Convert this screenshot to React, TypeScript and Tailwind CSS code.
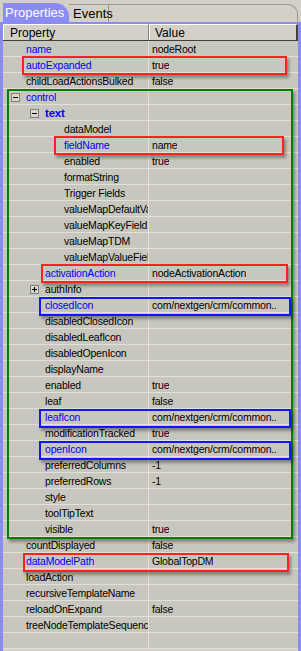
type Row = {
  label: string;
  value?: string;
  level: number;
  blue?: boolean;
  bold?: boolean;
  toggle?: "-" | "+";
};

const ROWS: Row[] = [
  { label: "name", value: "nodeRoot", level: 0, blue: true },
  { label: "autoExpanded", value: "true", level: 0, blue: true },
  { label: "childLoadActionsBulked", value: "false", level: 0 },
  { label: "control", level: 0, blue: true, toggle: "-" },
  { label: "text", level: 1, blue: true, bold: true, toggle: "-" },
  { label: "dataModel", level: 2 },
  { label: "fieldName", value: "name", level: 2, blue: true },
  { label: "enabled", value: "true", level: 2 },
  { label: "formatString", level: 2 },
  { label: "Trigger Fields", level: 2 },
  { label: "valueMapDefaultValue", level: 2 },
  { label: "valueMapKeyField", level: 2 },
  { label: "valueMapTDM", level: 2 },
  { label: "valueMapValueField", level: 2 },
  { label: "activationAction", value: "nodeActivationAction", level: 1, blue: true },
  { label: "authInfo", level: 1, toggle: "+" },
  { label: "closedIcon", value: "com/nextgen/crm/common..", level: 1, blue: true },
  { label: "disabledClosedIcon", level: 1 },
  { label: "disabledLeafIcon", level: 1 },
  { label: "disabledOpenIcon", level: 1 },
  { label: "displayName", level: 1 },
  { label: "enabled", value: "true", level: 1 },
  { label: "leaf", value: "false", level: 1 },
  { label: "leafIcon", value: "com/nextgen/crm/common..", level: 1, blue: true },
  { label: "modificationTracked", value: "true", level: 1 },
  { label: "openIcon", value: "com/nextgen/crm/common..", level: 1, blue: true },
  { label: "preferredColumns", value: "-1", level: 1 },
  { label: "preferredRows", value: "-1", level: 1 },
  { label: "style", level: 1 },
  { label: "toolTipText", level: 1 },
  { label: "visible", value: "true", level: 1 },
  { label: "countDisplayed", value: "false", level: 0 },
  { label: "dataModelPath", value: "GlobalTopDM", level: 0, blue: true },
  { label: "loadAction", level: 0 },
  { label: "recursiveTemplateName", level: 0 },
  { label: "reloadOnExpand", value: "false", level: 0 },
  { label: "treeNodeTemplateSequence", level: 0 },
  { label: "", level: 0 },
];

const PAD = ["pl-[23px]", "pl-[42px]", "pl-[61px]"];

function Toggle({ sign }: { sign: "-" | "+" }) {
  return (
    <span className="absolute -ml-[15px] mt-[4px] flex h-[9px] w-[9px] items-center justify-center border border-[#7f7f7f] bg-[#d8d6ce]">
      <span className="absolute h-px w-[5px] bg-black" />
      {sign === "+" && <span className="absolute h-[5px] w-px bg-black" />}
    </span>
  );
}

// annotation frames drawn over the grid
function Mark({ color, className }: { color: string; className: string }) {
  return (
    <div
      className={`pointer-events-none absolute border-2 shadow-[2px_3px_3px_rgba(0,0,0,0.35)] ${color} ${className}`}
    />
  );
}

export default function App() {
  return (
    <div className="h-[651px] w-[301px] overflow-hidden bg-[#d4d0c8] font-['Liberation_Sans',Arial,sans-serif] text-[10.5px] leading-[16px] tracking-[-0.2px] text-black">
      {/* tabs */}
      <div className="relative flex h-[22px] items-end tracking-normal">
        <div className="absolute left-[108px] right-[3px] top-[4px] h-[18px] rounded-tr-[10px] border-t border-r border-[#9d9a92]" />
        <div className="relative ml-[3px] h-[19px] w-[66px] rounded-tr-[14px] bg-[#8b8bf5] pl-[2px] pt-[2px] text-[13px] text-white">
          Properties
        </div>
        <div className="relative h-[18px] w-[40px] border-t border-r border-[#9d9a92] pl-[4px] pt-[1px] text-[13px]">
          Events
        </div>
      </div>

      {/* table frame */}
      <div className="border-x-[3px] border-t-[2px] border-[#8b8bf5] pb-[3px]">
        <div className="flex h-[17px] border-b border-[#404040] bg-[#d4d0c8] text-[12px] tracking-normal">
          <div className="w-[146px] border-t border-l border-r border-white border-r-[#808080] pl-[6px]">
            Property
          </div>
          <div className="flex-1 border-t border-l border-white border-r-2 border-r-[#404040] pl-[5px]">
            Value
          </div>
        </div>

        <div className="relative bg-[#c8c7bf]">
          {ROWS.map((r, i) => (
            <div key={i} className="flex h-[16px] border-b border-[#e3e0d8]">
              <div
                className={`relative w-[146px] shrink-0 overflow-hidden whitespace-nowrap border-r border-[#e3e0d8] ${PAD[r.level]} ${
                  r.blue ? "text-[#0000ff]" : ""
                } ${r.bold ? "text-[11.5px] font-bold" : ""}`}
              >
                {r.toggle && <Toggle sign={r.toggle} />}
                {r.label}
              </div>
              <div className="overflow-hidden whitespace-nowrap pl-[3px]">{r.value}</div>
            </div>
          ))}

          <Mark color="border-[#008000]" className="left-[4px] top-[48px] h-[450px] w-[286px]" />
          <Mark color="border-[#ff2020]" className="left-[19px] top-[15px] h-[19px] w-[265px]" />
          <Mark color="border-[#ff2020]" className="left-[51px] top-[95px] h-[19px] w-[230px]" />
          <Mark color="border-[#ff2020]" className="left-[38px] top-[223px] h-[19px] w-[247px]" />
          <Mark color="border-[#ff2020]" className="left-[20px] top-[512px] h-[19px] w-[266px]" />
          <Mark color="border-[#1414ff]" className="left-[36px] top-[256px] h-[19px] w-[252px]" />
          <Mark color="border-[#1414ff]" className="left-[36px] top-[368px] h-[19px] w-[252px]" />
          <Mark color="border-[#1414ff]" className="left-[36px] top-[400px] h-[19px] w-[252px]" />
        </div>
      </div>
    </div>
  );
}
